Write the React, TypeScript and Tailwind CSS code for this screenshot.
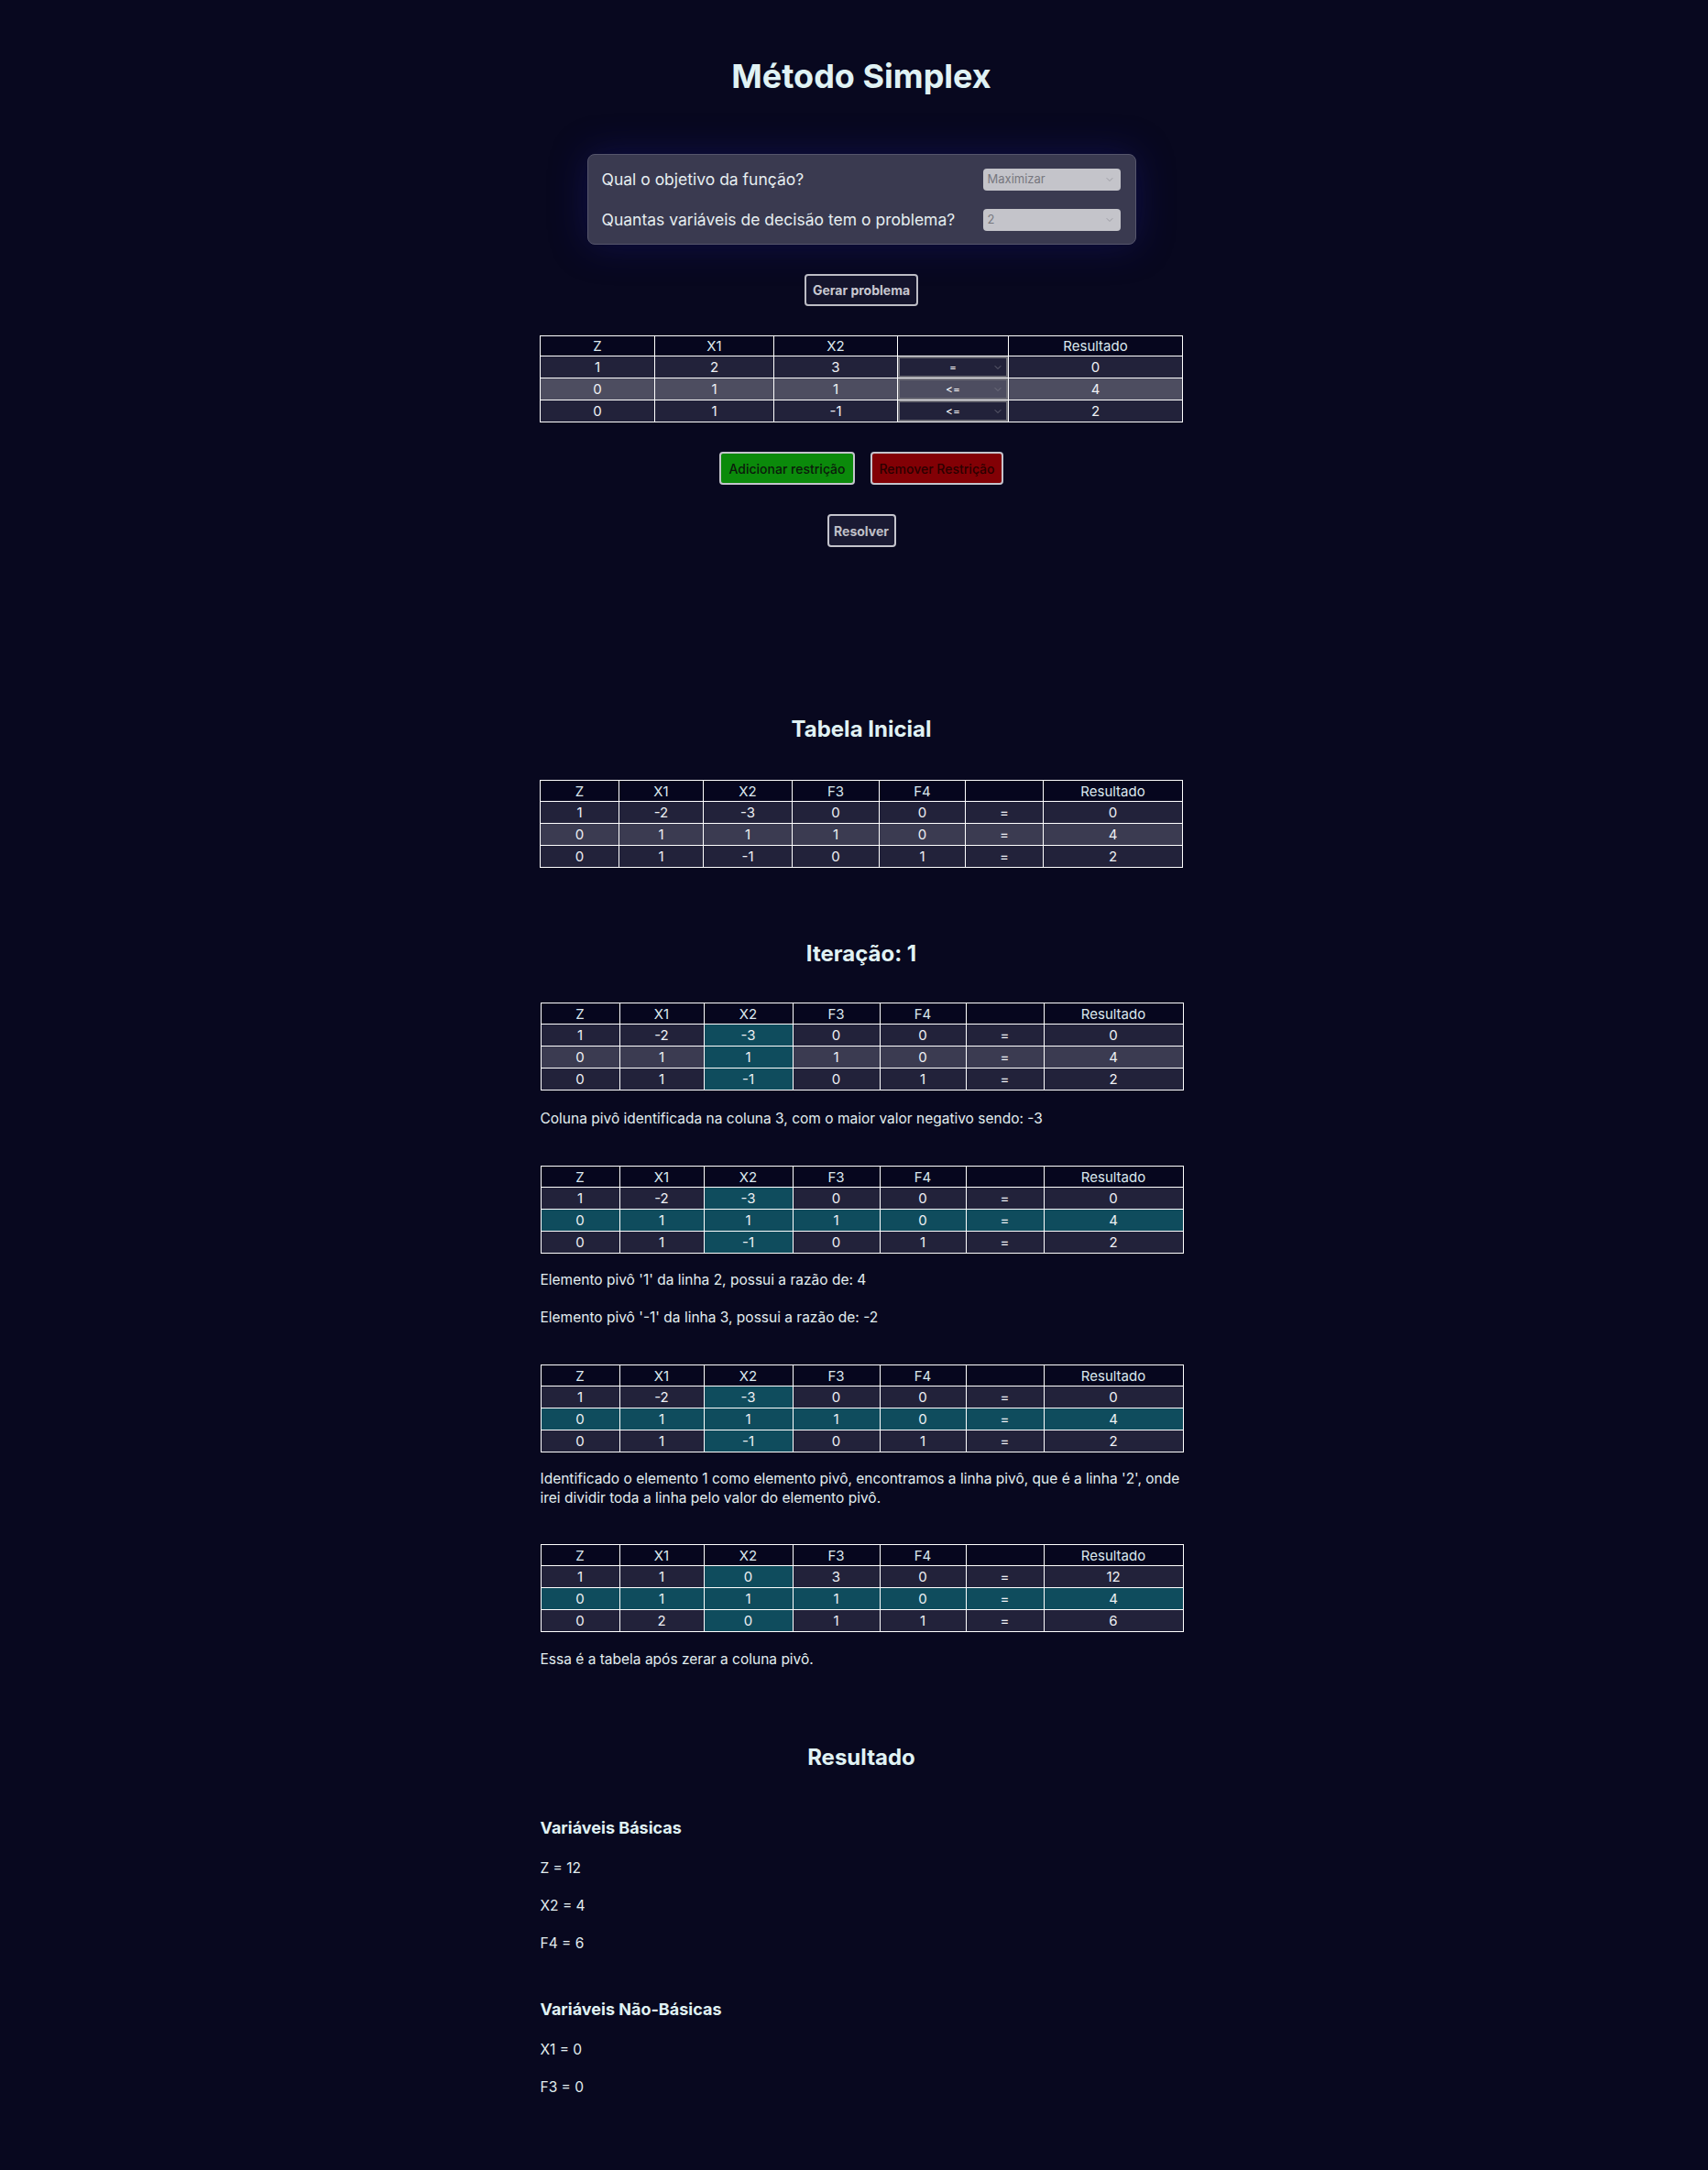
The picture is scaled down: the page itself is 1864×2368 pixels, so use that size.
import { ChevronDown } from "lucide-react";

const cols7 = ["Z", "X1", "X2", "F3", "F4", "", "Resultado"];
const widths7 = ["w-[86px]", "w-[92px]", "w-[97px]", "w-[95px]", "w-[94px]", "w-[85px]", "w-[152px]"];

const initial = [
  ["1", "-2", "-3", "0", "0", "=", "0"],
  ["0", "1", "1", "1", "0", "=", "4"],
  ["0", "1", "-1", "0", "1", "=", "2"],
];

const afterPivot = [
  ["1", "1", "0", "3", "0", "=", "12"],
  ["0", "1", "1", "1", "0", "=", "4"],
  ["0", "2", "0", "1", "1", "=", "6"],
];

function SimplexTable({ rows, pivotCol, pivotRow }: { rows: string[][]; pivotCol?: number; pivotRow?: number }) {
  return (
    <table className="w-[701px] border-collapse table-fixed text-[15px]">
      <thead>
        <tr className="h-[23px] bg-[#06061e]">
          {cols7.map((c, i) => (
            <th key={i} className={`${widths7[i]} border border-white font-normal text-[#dbe8ee] leading-none`}>
              {c}
            </th>
          ))}
        </tr>
      </thead>
      <tbody>
        {rows.map((r, ri) => (
          <tr key={ri} className={`h-[24px] ${ri === 1 ? "bg-[#3b3b51]" : "bg-[#22223a]"}`}>
            {r.map((v, ci) => {
              const hl = ci === pivotCol || ri === pivotRow;
              return (
                <td
                  key={ci}
                  className={`border border-white text-center leading-none text-[#eef0f4] ${hl ? "bg-[#0f4c5d]" : ""}`}
                >
                  {v}
                </td>
              );
            })}
          </tr>
        ))}
      </tbody>
    </table>
  );
}

function InputTable() {
  const rows = [
    ["1", "2", "3", "=", "0"],
    ["0", "1", "1", "<=", "4"],
    ["0", "1", "-1", "<=", "2"],
  ];
  const w = ["w-[125px]", "w-[130px]", "w-[135px]", "w-[121px]", "w-[190px]"];
  const head = ["Z", "X1", "X2", "", "Resultado"];
  return (
    <table className="w-[701px] border-collapse table-fixed text-[15px]">
      <thead>
        <tr className="h-[22px] bg-[#06061e]">
          {head.map((h, i) => (
            <th key={i} className={`${w[i]} border border-white font-normal text-[#dbe8ee] leading-none`}>
              {h}
            </th>
          ))}
        </tr>
      </thead>
      <tbody>
        {rows.map((r, ri) => (
          <tr key={ri} className={`h-[24px] ${ri === 1 ? "bg-[#4d4d60]" : "bg-[#22223a]"}`}>
            {r.map((v, ci) =>
              ci === 3 ? (
                <td key={ci} className="border border-white p-0">
                  <div className="relative h-[23px] border-2 border-[#6e6e78] flex items-center justify-center text-[12px] text-white">
                    {v}
                    <ChevronDown size={12} strokeWidth={1.5} className="absolute right-[3px] text-[#7e7e8a]" />
                  </div>
                </td>
              ) : (
                <td key={ci} className="border border-white text-center leading-none text-[#eef0f4]">
                  {v}
                </td>
              )
            )}
          </tr>
        ))}
      </tbody>
    </table>
  );
}

function Select({ value }: { value: string }) {
  return (
    <div className="w-[150px] h-[24px] rounded-[4px] bg-[#c4c4ca] flex items-center justify-between pl-[5px] pr-[6px] text-[13px] text-[#77777e]">
      <span>{value}</span>
      <ChevronDown size={12} strokeWidth={1.5} className="text-[#8e8e96]" />
    </div>
  );
}

export default function App() {
  return (
    <div className="min-h-screen bg-[#08081f] text-[#e2eef0] font-['Inter',sans-serif] pb-[70px]">
      <div className="flex flex-col items-center pt-[61px] pl-[16px]">
        <h1 className="text-[36px] leading-[44px] font-bold text-[#e0f2f4]">Método Simplex</h1>

        {/* opções do problema */}
        <div className="mt-[63px] w-[599px] rounded-[8px] border border-[#56566c] bg-[#3a3a50] pt-[15px] pb-[14px] pl-[15px] pr-[16px] flex flex-col gap-[20px] shadow-[0_0_40px_rgba(30,30,150,0.35)]">
          <div className="flex items-center justify-between h-[24px]">
            <span className="text-[17.5px] leading-[24px] text-[#e6eef0]">Qual o objetivo da função?</span>
            <Select value="Maximizar" />
          </div>
          <div className="flex items-center justify-between h-[24px]">
            <span className="text-[17.5px] leading-[24px] text-[#e6eef0]">Quantas variáveis de decisão tem o problema?</span>
            <Select value="2" />
          </div>
        </div>

        <button className="mt-[32px] w-[124px] h-[35px] rounded-[4px] border-2 border-[#bcbcc4] bg-[#14142c] text-[14px] font-bold text-[#c8c8d0]">
          Gerar problema
        </button>

        <div className="mt-[32px]">
          <InputTable />
        </div>

        <div className="mt-[32px] flex gap-[17px]">
          <button className="w-[148px] h-[36px] rounded-[4px] border-2 border-[#c4c4cc] bg-[#0b8a0b] text-[14px] font-medium text-[#0b1a0b]">
            Adicionar restrição
          </button>
          <button className="w-[145px] h-[36px] rounded-[4px] border-2 border-[#c4c4cc] bg-[#820005] text-[14px] font-medium text-[#2a0000]">
            Remover Restrição
          </button>
        </div>

        <button className="mt-[32px] w-[75px] h-[36px] rounded-[4px] border-2 border-[#c4c4cc] bg-[#1a1a33] text-[14px] font-bold text-[#c0c0c8]">
          Resolver
        </button>

        {/* tabela inicial */}
        <h2 className="mt-[183px] text-[24px] leading-[32px] font-bold text-[#e0f2f4]">Tabela Inicial</h2>
        <div className="mt-[39px]">
          <SimplexTable rows={initial} />
        </div>

        <h2 className="mt-[78px] text-[24px] leading-[32px] font-bold text-[#e0f2f4]">Iteração: 1</h2>

        <div className="w-[701px] flex flex-col text-[15.5px] leading-[21px]">
          <div className="mt-[37px]">
            <SimplexTable rows={initial} pivotCol={2} />
          </div>
          <p className="mt-[20px]">Coluna pivô identificada na coluna 3, com o maior valor negativo sendo: -3</p>

          <div className="mt-[41px]">
            <SimplexTable rows={initial} pivotCol={2} pivotRow={1} />
          </div>
          <p className="mt-[18px]">Elemento pivô '1' da linha 2, possui a razão de: 4</p>
          <p className="mt-[20px]">Elemento pivô '-1' da linha 3, possui a razão de: -2</p>

          <div className="mt-[41px]">
            <SimplexTable rows={initial} pivotCol={2} pivotRow={1} />
          </div>
          <p className="mt-[18px]">
            Identificado o elemento 1 como elemento pivô, encontramos a linha pivô, que é a linha '2', onde
            <br />
            irei dividir toda a linha pelo valor do elemento pivô.
          </p>

          <div className="mt-[40px]">
            <SimplexTable rows={afterPivot} pivotCol={2} pivotRow={1} />
          </div>
          <p className="mt-[19px]">Essa é a tabela após zerar a coluna pivô.</p>

          <h2 className="mt-[81px] self-center text-[24px] leading-[32px] font-bold text-[#e0f2f4]">Resultado</h2>

          <h3 className="mt-[49px] text-[18px] leading-[24px] font-bold text-[#e0f2f4]">Variáveis Básicas</h3>
          <p className="mt-[21px]">Z = 12</p>
          <p className="mt-[20px]">X2 = 4</p>
          <p className="mt-[20px]">F4 = 6</p>

          <h3 className="mt-[50px] text-[18px] leading-[24px] font-bold text-[#e0f2f4]">Variáveis Não-Básicas</h3>
          <p className="mt-[21px]">X1 = 0</p>
          <p className="mt-[20px]">F3 = 0</p>
        </div>
      </div>
    </div>
  );
}
